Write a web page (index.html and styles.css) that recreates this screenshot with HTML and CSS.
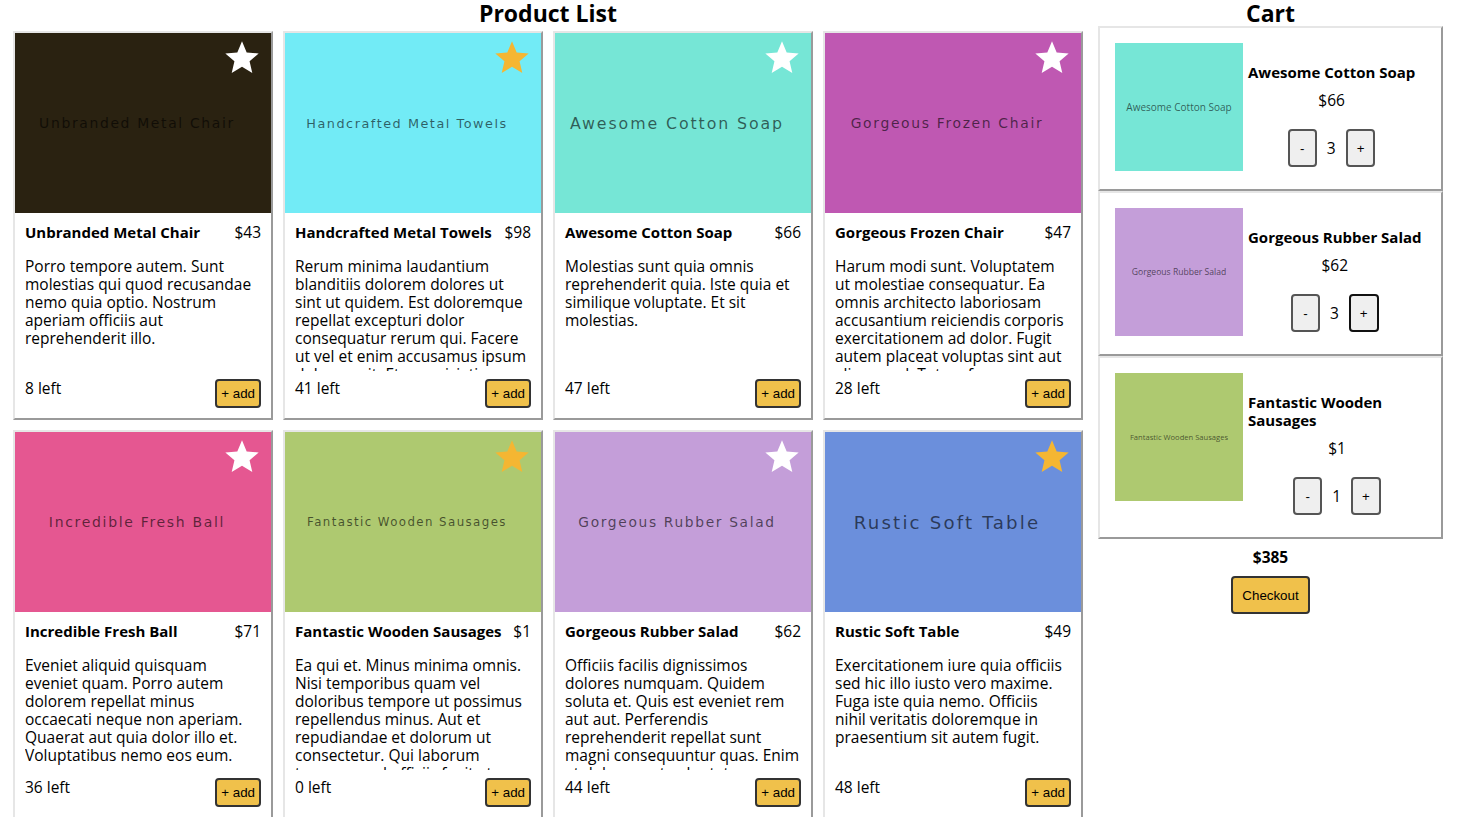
FILE: index.html
```html
<!DOCTYPE html>
<html lang="en">
<head>
<meta charset="utf-8">
<title>Product List</title>
<link rel="stylesheet" href="styles.css">
</head>
<body>
<svg class="defs" aria-hidden="true">
  <symbol id="star" viewBox="0 0 24 24">
    <path d="M12 17.27L18.18 21l-1.64-7.03L22 9.24l-7.19-.61L12 2 9.19 8.63 2 9.24l5.46 4.73L5.82 21z"/>
  </symbol>
</svg>
<div class="app">
  <section class="products">
    <h2 class="heading">Product List</h2>
    <div class="grid">
      <div class="card">
        <div class="thumb t-chair"><span class="thumb-text">Unbranded Metal Chair</span><svg class="star"><use href="#star"/></svg></div>
        <div class="body">
          <div class="title-row"><span class="name">Unbranded Metal Chair</span><span class="price">$43</span></div>
          <p class="desc">Porro tempore autem. Sunt molestias qui quod recusandae nemo quia optio. Nostrum aperiam officiis aut reprehenderit illo.</p>
          <div class="foot"><span class="stock">8 left</span><button class="add">+ add</button></div>
        </div>
      </div>
      <div class="card">
        <div class="thumb t-towels"><span class="thumb-text">Handcrafted Metal Towels</span><svg class="star star-on"><use href="#star"/></svg></div>
        <div class="body">
          <div class="title-row"><span class="name">Handcrafted Metal Towels</span><span class="price">$98</span></div>
          <p class="desc">Rerum minima laudantium blanditiis dolorem dolores ut sint ut quidem. Est doloremque repellat excepturi dolor consequatur rerum qui. Facere ut vel et enim accusamus ipsum dolorem sit. Et perspiciatis voluptatem.</p>
          <div class="foot"><span class="stock">41 left</span><button class="add">+ add</button></div>
        </div>
      </div>
      <div class="card">
        <div class="thumb t-soap"><span class="thumb-text">Awesome Cotton Soap</span><svg class="star"><use href="#star"/></svg></div>
        <div class="body">
          <div class="title-row"><span class="name">Awesome Cotton Soap</span><span class="price">$66</span></div>
          <p class="desc">Molestias sunt quia omnis reprehenderit quia. Iste quia et similique voluptate. Et sit molestias.</p>
          <div class="foot"><span class="stock">47 left</span><button class="add">+ add</button></div>
        </div>
      </div>
      <div class="card">
        <div class="thumb t-frozen"><span class="thumb-text">Gorgeous Frozen Chair</span><svg class="star"><use href="#star"/></svg></div>
        <div class="body">
          <div class="title-row"><span class="name">Gorgeous Frozen Chair</span><span class="price">$47</span></div>
          <p class="desc">Harum modi sunt. Voluptatem ut molestiae consequatur. Ea omnis architecto laboriosam accusantium reiciendis corporis exercitationem ad dolor. Fugit autem placeat voluptas sint aut alias quod. Totam fuga.</p>
          <div class="foot"><span class="stock">28 left</span><button class="add">+ add</button></div>
        </div>
      </div>
      <div class="card">
        <div class="thumb t-ball"><span class="thumb-text">Incredible Fresh Ball</span><svg class="star"><use href="#star"/></svg></div>
        <div class="body">
          <div class="title-row"><span class="name">Incredible Fresh Ball</span><span class="price">$71</span></div>
          <p class="desc">Eveniet aliquid quisquam eveniet quam. Porro autem dolorem repellat minus occaecati neque non aperiam. Quaerat aut quia dolor illo et. Voluptatibus nemo eos eum.</p>
          <div class="foot"><span class="stock">36 left</span><button class="add">+ add</button></div>
        </div>
      </div>
      <div class="card">
        <div class="thumb t-sausages"><span class="thumb-text">Fantastic Wooden Sausages</span><svg class="star star-on"><use href="#star"/></svg></div>
        <div class="body">
          <div class="title-row"><span class="name">Fantastic Wooden Sausages</span><span class="price">$1</span></div>
          <p class="desc">Ea qui et. Minus minima omnis. Nisi temporibus quam vel doloribus tempore ut possimus repellendus minus. Aut et repudiandae et dolorum ut consectetur. Qui laborum tempora sed officiis fugit et.</p>
          <div class="foot"><span class="stock">0 left</span><button class="add">+ add</button></div>
        </div>
      </div>
      <div class="card">
        <div class="thumb t-salad"><span class="thumb-text">Gorgeous Rubber Salad</span><svg class="star"><use href="#star"/></svg></div>
        <div class="body">
          <div class="title-row"><span class="name">Gorgeous Rubber Salad</span><span class="price">$62</span></div>
          <p class="desc">Officiis facilis dignissimos dolores numquam. Quidem soluta et. Quis est eveniet rem aut aut. Perferendis reprehenderit repellat sunt magni consequuntur quas. Enim et dolores aut voluptatem molestiae illo.</p>
          <div class="foot"><span class="stock">44 left</span><button class="add">+ add</button></div>
        </div>
      </div>
      <div class="card">
        <div class="thumb t-table"><span class="thumb-text">Rustic Soft Table</span><svg class="star star-on"><use href="#star"/></svg></div>
        <div class="body">
          <div class="title-row"><span class="name">Rustic Soft Table</span><span class="price">$49</span></div>
          <p class="desc">Exercitationem iure quia officiis sed hic illo iusto vero maxime. Fuga iste quia nemo. Officiis nihil veritatis doloremque in praesentium sit autem fugit.</p>
          <div class="foot"><span class="stock">48 left</span><button class="add">+ add</button></div>
        </div>
      </div>
    </div>
  </section>
  <aside class="cart">
    <h2 class="heading">Cart</h2>
    <div class="cart-item">
      <div class="cart-thumb t-soap ct-soap">Awesome Cotton Soap</div>
      <div class="cart-info">
        <h4 class="cart-name">Awesome Cotton Soap</h4>
        <p class="cart-price">$66</p>
        <div class="qty"><button class="qty-btn">-</button><span class="qty-num">3</span><button class="qty-btn">+</button></div>
      </div>
    </div>
    <div class="cart-item">
      <div class="cart-thumb t-salad ct-salad">Gorgeous Rubber Salad</div>
      <div class="cart-info">
        <h4 class="cart-name">Gorgeous Rubber Salad</h4>
        <p class="cart-price">$62</p>
        <div class="qty"><button class="qty-btn">-</button><span class="qty-num">3</span><button class="qty-btn qty-focus">+</button></div>
      </div>
    </div>
    <div class="cart-item">
      <div class="cart-thumb t-sausages ct-sausages">Fantastic Wooden Sausages</div>
      <div class="cart-info">
        <h4 class="cart-name">Fantastic Wooden Sausages</h4>
        <p class="cart-price">$1</p>
        <div class="qty"><button class="qty-btn">-</button><span class="qty-num">1</span><button class="qty-btn">+</button></div>
      </div>
    </div>
    <p class="total">$385</p>
    <div class="checkout-row"><button class="checkout">Checkout</button></div>
  </aside>
</div>
</body>
</html>
```
FILE: styles.css
```css
* { box-sizing: border-box; }

body {
  margin: 0 8px;
  font-family: "Open Sans", "Liberation Sans", sans-serif;
  font-size: 15.5px;
  color: #000;
  background: #fff;
}

.defs { display: none; }

.app {
  display: flex;
  align-items: flex-start;
  gap: 10px;
}

.products { width: 1080px; flex: none; }

.heading {
  margin: 0;
  line-height: 26px;
  font-size: 23px;
  font-weight: 700;
  text-align: center;
}

.grid {
  display: grid;
  grid-template-columns: repeat(4, 260px);
  gap: 10px;
  padding: 5px;
}

.card {
  height: 389px;
  border: 2px solid;
  border-color: #e6e6e6 #9a9a9a #9a9a9a #e6e6e6;
  background: #fff;
  overflow: hidden;
}

.thumb {
  position: relative;
  height: 180px;
  display: flex;
  align-items: center;
  justify-content: center;
  padding-right: 12px;
}

.thumb-text {
  font-family: "DejaVu Sans", sans-serif;
  letter-spacing: 0.12em;
  color: rgba(0, 0, 0, 0.6);
  white-space: nowrap;
}

.star {
  position: absolute;
  top: 5px;
  right: 9px;
  width: 40px;
  height: 40px;
  fill: #fff;
}

.star-on { fill: #f5b632; }

.t-chair { background: #2a2211; font-size: 13.9px; }
.t-towels { background: #72ebf6; font-size: 12.8px; }
.t-soap { background: #76e6d6; font-size: 15.8px; }
.t-frozen { background: #bf58b2; font-size: 13.9px; }
.t-ball { background: #e55791; font-size: 14px; }
.t-sausages { background: #aec970; font-size: 11.8px; }
.t-salad { background: #c49ed9; font-size: 13.8px; }
.t-table { background: #6b8fdc; font-size: 18.2px; }

.body { padding: 10px; }

.title-row {
  display: flex;
  justify-content: space-between;
  gap: 6px;
  height: 18px;
  line-height: 18px;
}

.name {
  font-weight: 700;
  font-size: 15px;
  white-space: nowrap;
}

.desc {
  margin: 16px 0 0;
  height: 114px;
  overflow: hidden;
  line-height: 18px;
}

.foot {
  margin-top: 8px;
  display: flex;
  justify-content: space-between;
  align-items: flex-start;
  line-height: 18px;
}

.add {
  height: 29px;
  padding: 5px 4px;
  font-family: "Liberation Sans", Arial, sans-serif;
  font-size: 13.33px;
  line-height: 15px;
  color: #000;
  background: #f0c14b;
  border: 2px solid #333;
  border-radius: 4px;
}

.cart { width: 345px; flex: none; }

.cart-item {
  display: flex;
  align-items: flex-start;
  padding: 15px;
  border: 2px solid;
  border-color: #e6e6e6 #9a9a9a #9a9a9a #e6e6e6;
}

.cart-thumb {
  flex: none;
  width: 128px;
  height: 128px;
  display: flex;
  align-items: center;
  justify-content: center;
  color: rgba(0, 0, 0, 0.6);
  white-space: nowrap;
  font-family: "Open Sans", sans-serif;
  letter-spacing: 0;
}

.ct-soap { font-size: 10px; }
.ct-salad { font-size: 8.6px; }
.ct-sausages { font-size: 7.6px; }

.cart-info {
  margin-left: 5px;
  min-width: 0;
  text-align: center;
}

.cart-name {
  margin: 20px 0 0;
  font-size: 15px;
  font-weight: 700;
  line-height: 18px;
  text-align: left;
}

.cart-price {
  margin: 10px 0 0;
  line-height: 18px;
}

.qty {
  margin: 20px 0 7px;
  display: flex;
  justify-content: center;
  align-items: center;
  gap: 10px;
}

.qty-btn {
  height: 38px;
  min-width: 29px;
  padding: 10px 9px;
  font-family: "Liberation Sans", Arial, sans-serif;
  font-size: 13.33px;
  line-height: 15px;
  color: #000;
  background: #efefef;
  border: 2px solid #555;
  border-radius: 4px;
}

.qty-focus { border-color: #111; }

.qty-num { line-height: 18px; }

.total {
  margin: 9px 0 0;
  text-align: center;
  font-weight: 700;
  line-height: 18px;
}

.checkout-row {
  margin-top: 10px;
  text-align: center;
}

.checkout {
  height: 38px;
  padding: 10px 9px;
  font-family: "Liberation Sans", Arial, sans-serif;
  font-size: 13.33px;
  line-height: 15px;
  color: #000;
  background: #f0c14b;
  border: 2px solid #333;
  border-radius: 4px;
}
```
